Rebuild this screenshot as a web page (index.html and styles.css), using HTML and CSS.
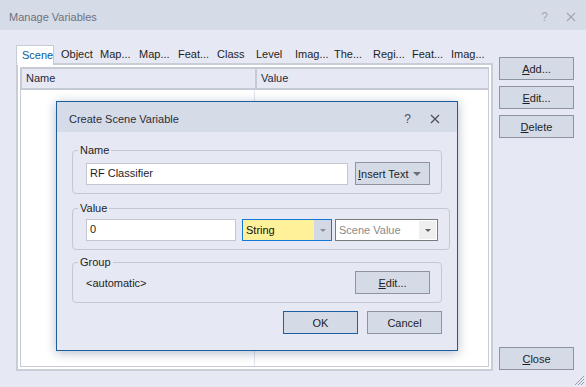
FILE: index.html
```html
<!DOCTYPE html>
<html lang="en">
<head>
    <meta charset="UTF-8">
    <title>Manage Variables</title>
    <link rel="stylesheet" href="styles.css">
</head>
<body>
    <div class="window">
        <div class="titlebar">
            <span class="title">Manage Variables</span>
            <span class="tb-help">?</span>
            <svg class="tb-close" width="10" height="10" viewBox="0 0 10 10"><path d="M1 1L9 9M9 1L1 9" stroke="#a3a8b3" stroke-width="1.2"/></svg>
        </div>
        <div class="content">
            <div class="left">
                <div class="tabs">
                    <div class="tab selected">Scene</div>
                    <div class="tab">Object</div>
                    <div class="tab">Map...</div>
                    <div class="tab">Map...</div>
                    <div class="tab">Feat...</div>
                    <div class="tab">Class</div>
                    <div class="tab">Level</div>
                    <div class="tab">Imag...</div>
                    <div class="tab">The...</div>
                    <div class="tab">Regi...</div>
                    <div class="tab">Feat...</div>
                    <div class="tab">Imag...</div>
                </div>
                <div class="tab-panel">
                    <div class="list">
                        <div class="list-head">
                            <div class="col col-name">Name</div>
                            <div class="col col-value">Value</div>
                        </div>
                        <div class="list-body">
                            <div class="grid-col"></div>
                        </div>
                    </div>
                </div>
            </div>
            <div class="side">
                <button class="btn"><u>A</u>dd...</button>
                <button class="btn"><u>E</u>dit...</button>
                <button class="btn"><u>D</u>elete</button>
                <button class="btn close-btn"><u>C</u>lose</button>
            </div>
        </div>
        <svg class="grip" width="11" height="11" viewBox="0 0 11 11">
            <path d="M10 1L1 10M10 4L4 10M10 7L7 10" stroke="#9aa0ab" stroke-width="1"/>
        </svg>

        <div class="dialog">
            <div class="dlg-titlebar">
                <span class="dlg-title">Create Scene Variable</span>
                <span class="dlg-help">?</span>
                <svg class="dlg-close" width="10" height="10" viewBox="0 0 10 10"><path d="M1 1L9 9M9 1L1 9" stroke="#4a4e58" stroke-width="1.2"/></svg>
            </div>
            <div class="dlg-body">
                <fieldset class="group group-name">
                    <legend>Name</legend>
                    <div class="row">
                        <div class="field name-field">RF Classifier</div>
                        <button class="btn insert-btn"><span><u>I</u>nsert Text</span><span class="tri"></span></button>
                    </div>
                </fieldset>
                <fieldset class="group group-value">
                    <legend>Value</legend>
                    <div class="row">
                        <div class="field value-field">0</div>
                        <div class="combo combo-type">
                            <span class="combo-text">String</span>
                            <span class="combo-arrow"><span class="tri small"></span></span>
                        </div>
                        <div class="combo combo-source">
                            <span class="combo-text">Scene Value</span>
                            <span class="combo-arrow"><span class="tri small"></span></span>
                        </div>
                    </div>
                </fieldset>
                <fieldset class="group group-group">
                    <legend>Group</legend>
                    <div class="row">
                        <span class="auto-text">&lt;automatic&gt;</span>
                        <button class="btn group-edit"><u>E</u>dit...</button>
                    </div>
                </fieldset>
                <div class="dlg-buttons">
                    <button class="btn ok-btn">OK</button>
                    <button class="btn">Cancel</button>
                </div>
            </div>
        </div>
    </div>
</body>
</html>
```

FILE: styles.css
```css
body {
    margin: 0;
    font-family: "Liberation Sans", Arial, sans-serif;
    font-size: 11px;
    color: #1e1e1e;
    overflow: hidden;
}
.window {
    position: relative;
    width: 586px;
    height: 387px;
    background-color: #e6e9f3;
    display: flex;
    flex-direction: column;
}
.titlebar {
    height: 30px;
    flex: 0 0 30px;
    background-color: #d6dbe8;
    display: flex;
    align-items: center;
    padding: 0 9px;
}
.title {
    color: #6e727c;
    flex: 1;
    padding-top: 4px;
}
.tb-help {
    color: #a3a8b3;
    font-size: 12px;
    margin-right: 18px;
    padding-top: 4px;
}
.tb-close {
    margin-right: 1px;
    margin-top: 4px;
}
.content {
    flex: 1;
    display: flex;
    padding: 15px 12px 16px 16px;
    gap: 6px;
}
.left {
    width: 477px;
    display: flex;
    flex-direction: column;
}
.tabs {
    display: flex;
    height: 18px;
    position: relative;
    z-index: 1;
}
.tab {
    width: 39px;
    flex: 0 0 39px;
    box-sizing: border-box;
    padding-left: 6px;
    line-height: 18px;
    white-space: nowrap;
    color: #1e1e1e;
}
.tab.selected {
    width: 38px;
    flex: 0 0 38px;
    margin-right: 1px;
    background-color: #ffffff;
    border: 1px solid #c6cad4;
    border-bottom: none;
    padding-left: 5px;
    line-height: 18px;
    height: 20px;
    color: #0b5a98;
}
.tab-panel {
    flex: 1;
    background-color: #ffffff;
    border: 2px solid #c9cdd6;
    padding: 2px;
    display: flex;
}
.list {
    flex: 1;
    border: 1px solid #c6cad4;
    display: flex;
    flex-direction: column;
}
.list-head {
    display: flex;
    height: 22px;
    box-sizing: border-box;
    background-color: #e6e9f3;
    border-top: 1px solid #c6cad4;
    border-left: 1px solid #c6cad4;
    border-bottom: 2px solid #c6cad4;
    color: #1f2940;
}
.col {
    box-sizing: border-box;
    line-height: 19px;
    padding-left: 4px;
}
.col-name {
    width: 235px;
    border-right: 2px solid #c6cad4;
}
.col-value {
    flex: 1;
}
.list-body {
    flex: 1;
    display: flex;
}
.grid-col {
    width: 233px;
    border-right: 1px solid #e2e5ec;
}
.side {
    display: flex;
    flex-direction: column;
    padding-top: 12px;
    padding-bottom: 1px;
    gap: 6px;
}
.btn {
    font-family: "Liberation Sans", Arial, sans-serif;
    font-size: 11px;
    color: #1e1e1e;
    width: 75px;
    height: 23px;
    padding: 0;
    white-space: nowrap;
    background-color: #d5dae7;
    border: 1px solid #8e939f;
    border-radius: 0;
}
.btn u {
    text-underline-offset: 1px;
}
.close-btn {
    margin-top: auto;
}
.grip {
    position: absolute;
    right: 1px;
    bottom: 1px;
}

/* modal dialog on top of the list */
.dialog {
    position: absolute;
    left: 56px;
    top: 101px;
    width: 402px;
    box-sizing: border-box;
    border: 1px solid #1a5e9e;
    background-color: #e6e9f3;
    box-shadow: 0 2px 10px rgba(40, 60, 100, 0.35);
}
.dlg-titlebar {
    height: 30px;
    background-color: #d6dbe8;
    display: flex;
    align-items: center;
    padding: 0 17px 0 12px;
}
.dlg-title {
    flex: 1;
    color: #2a2e38;
    padding-top: 3px;
}
.dlg-help {
    color: #4a4e58;
    font-size: 12px;
    margin-right: 19px;
    padding-top: 3px;
}
.dlg-close {
    margin-top: 3px;
}
.dlg-body {
    padding: 12px 15px 16px 15px;
}
.group {
    margin: 0;
    border: 1px solid #c4c8d2;
    border-radius: 4px;
    padding: 4px 11px 8px 13px;
}
.group legend {
    margin-left: -8px;
    padding: 0 2px;
    line-height: 13px;
    color: #1e1e1e;
}
.group-name {
    padding-top: 5px;
}
.group-value {
    margin-top: 8px;
}
.group-group {
    margin-top: 6px;
    padding-top: 2px;
}
.row {
    display: flex;
    align-items: center;
}
.field {
    height: 22px;
    box-sizing: border-box;
    background-color: #ffffff;
    border: 1px solid #c3c7cf;
    padding-left: 3px;
    line-height: 19px;
}
.name-field {
    width: 262px;
    margin-right: 7px;
}
.value-field {
    width: 150px;
    margin-right: 6px;
}
.insert-btn {
    display: flex;
    align-items: center;
    justify-content: space-between;
    padding: 0 8px 0 2px;
    height: 23px;
}
.tri {
    width: 0;
    height: 0;
    border-left: 4px solid transparent;
    border-right: 4px solid transparent;
    border-top: 4px solid #6a6e78;
}
.tri.small {
    border-left-width: 3px;
    border-right-width: 3px;
    border-top-width: 3px;
}
.combo {
    height: 22px;
    box-sizing: border-box;
    display: flex;
}
.combo-text {
    flex: 1;
    padding-left: 3px;
    line-height: 20px;
}
.combo-arrow {
    width: 17px;
    display: flex;
    align-items: center;
    justify-content: center;
}
.combo-type {
    width: 90px;
    margin-right: 3px;
    border: 1px solid #1479d6;
    background-color: #fff09a;
    color: #111111;
}
.combo-type .combo-arrow {
    background-color: #d3d8e5;
}
.combo-type .tri {
    border-top-color: #8a8e98;
}
.combo-source {
    width: 103px;
    border: 1px solid #7a7a7a;
    background-color: #ffffff;
    color: #8a8a8a;
}
.combo-source .combo-arrow {
    background-color: #efefef;
    margin: 1px;
}
.combo-source .tri {
    border-top-color: #606060;
}
.auto-text {
    flex: 1;
}
.group-edit {
    margin-left: auto;
}
.dlg-buttons {
    display: flex;
    justify-content: flex-end;
    gap: 9px;
    margin-top: 8px;
}
.ok-btn {
    border-color: #1f5f9f;
}
```
